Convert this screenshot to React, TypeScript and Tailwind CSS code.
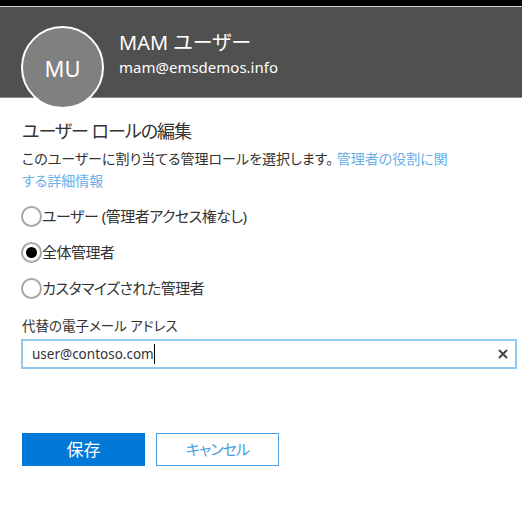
import React from "react";

function Radio({ checked, label }: { checked?: boolean; label: string }) {
  return (
    <div className="flex items-center h-[22px] leading-[22px]">
      <span className="w-[21px] h-[21px] rounded-full border-2 border-[#a8a8a8] bg-white flex items-center justify-center shrink-0">
        {checked && <span className="w-[11px] h-[11px] rounded-full bg-black" />}
      </span>
      <span className="text-[15px] text-[#333] leading-[22px] tracking-[-0.5px]">{label}</span>
    </div>
  );
}

export default function App() {
  return (
    <div className="w-[522px] h-[529px] bg-white overflow-hidden font-['Noto_Sans','Noto_Sans_CJK_JP',sans-serif] [font-feature-settings:'palt']">
      <div className="h-[6px] bg-black" />
      <div className="h-[92px] bg-[#505050] border-t border-[#cfcfcf] border-b border-b-[#8c8c8c] flex items-start">
        <div className="relative z-10 ml-[21px] mt-[19px] w-[83px] h-[83px] rounded-full border-2 border-white bg-[#808080] flex items-center justify-center shrink-0">
          <span className="text-white text-[22px] leading-none">MU</span>
        </div>
        <div className="ml-[15px] mt-[22px] text-white">
          <div className="text-[20px] leading-[28px]">MAM ユーザー</div>
          <div className="text-[15px] leading-[20px]">mam@emsdemos.info</div>
        </div>
      </div>
      <div className="px-[22px] pt-[20px]">
        <div className="text-[18px] leading-[26px] text-[#333] tracking-[-1px]">ユーザー ロールの編集</div>
        <div className="mt-[4px] text-[14px] leading-[22px] text-[#333] w-[430px]">
          このユーザーに割り当てる管理ロールを選択します。{" "}
          <span className="text-[#6ab0e8]">管理者の役割に関する詳細情報</span>
        </div>
        <div className="mt-[13px] ml-[-1px] flex flex-col gap-[14px]">
          <Radio label="ユーザー (管理者アクセス権なし)" />
          <Radio checked label="全体管理者" />
          <Radio label="カスタマイズされた管理者" />
        </div>
        <div className="mt-[18px] text-[13.5px] leading-[18px] text-[#333]">代替の電子メール アドレス</div>
        <div className="mt-[4px] ml-[-1px] w-[496px] h-[30px] border-2 border-[#92c7f0] flex items-center">
          <span className="ml-[9px] text-[13.5px] text-[#333]">user@contoso.com</span>
          <span className="w-[1px] h-[20px] bg-black" />
          <span className="ml-auto mr-[6px] text-[#333]">
            <svg width="12" height="12" viewBox="0 0 12 12">
              <path d="M2 2 L10 10 M10 2 L2 10" stroke="#444" strokeWidth="2" />
            </svg>
          </span>
        </div>
        <div className="mt-[64px] flex gap-[11px]">
          <button className="w-[123px] h-[33px] bg-[#0078d7] text-white text-[17px]">保存</button>
          <button className="w-[123px] h-[33px] border border-[#4a9de0] bg-white text-[#4a9de0] text-[15px] tracking-[-1px]">キャンセル</button>
        </div>
      </div>
    </div>
  );
}
